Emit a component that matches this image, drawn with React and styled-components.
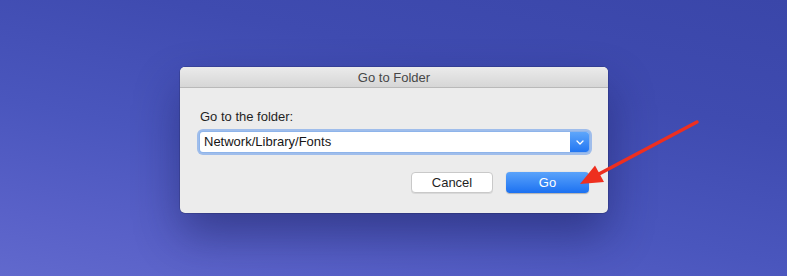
import React from "react";
import styled, { createGlobalStyle } from "styled-components";

const Global = createGlobalStyle`
  html, body { margin: 0; padding: 0; }
  body { font-family: "Liberation Sans", Arial, sans-serif; overflow: hidden; }
`;

const Desktop = styled.div`
  position: relative;
  width: 787px;
  height: 276px;
  box-sizing: border-box;
  padding: 67px 0 0 180px;
  background: linear-gradient(192deg, #3a46a9 0%, #3f4bb0 30%, #4a56bd 60%, #5961c8 85%, #6169cd 100%);
  overflow: hidden;
`;

const Dialog = styled.div`
  width: 428px;
  height: 146px;
  box-sizing: border-box;
  background: #ececec;
  border-radius: 5px;
  box-shadow: 0 0 0 0.5px rgba(0, 0, 0, 0.25), 0 22px 45px rgba(20, 22, 80, 0.45);
  display: flex;
  flex-direction: column;
  overflow: hidden;
`;

const TitleBar = styled.div`
  height: 20px;
  flex: none;
  border-bottom: 1px solid #b9b9b9;
  background: linear-gradient(#ebebeb, #d6d6d6);
  color: #474747;
  font-size: 13px;
  line-height: 21px;
  text-align: center;
`;

const Body = styled.div`
  padding: 21px 19px 20px 20px;
  display: flex;
  flex-direction: column;
`;

const Label = styled.div`
  font-size: 13px;
  line-height: 16px;
  color: #1f1f1f;
`;

const Combo = styled.div`
  margin-top: 7px;
  height: 20px;
  display: flex;
  border-radius: 3px;
  background: #fff;
  box-shadow: 0 0 0 1px #8eb4ea, 0 0 0 3px #9fbdeb;
`;

const Field = styled.div`
  flex: 1;
  padding-left: 4px;
  font-size: 13px;
  line-height: 20px;
  color: #161616;
`;

const DropButton = styled.div`
  width: 19px;
  flex: none;
  display: flex;
  align-items: center;
  justify-content: center;
  border-radius: 0 3px 3px 0;
  background: linear-gradient(#5ea6fb, #2276f2);
`;

const Actions = styled.div`
  margin-top: 20px;
  display: flex;
  justify-content: flex-end;
  gap: 13px;
`;

const Button = styled.div`
  width: ${(p) => p.$w}px;
  height: 21px;
  box-sizing: border-box;
  border-radius: 4px;
  font-size: 13px;
  line-height: ${(p) => (p.$primary ? 21 : 19)}px;
  text-align: center;
  color: ${(p) => (p.$primary ? "#fff" : "#1f1f1f")};
  background: ${(p) => (p.$primary ? "linear-gradient(#5aa3fb, #1c71f1)" : "#fff")};
  border: ${(p) => (p.$primary ? "none" : "1px solid #c9c9c9")};
  box-shadow: ${(p) => (p.$primary ? "0 0.5px 1px rgba(0,0,0,0.25)" : "0 1px 0 rgba(0,0,0,0.08)")};
`;

const ArrowLayer = styled.svg`
  position: absolute;
  left: 0;
  top: 0;
  pointer-events: none;
`;

export default function App() {
  return (
    <>
      <Global />
      <Desktop>
        <Dialog>
          <TitleBar>Go to Folder</TitleBar>
          <Body>
            <Label>Go to the folder:</Label>
            <Combo>
              <Field>Network/Library/Fonts</Field>
              <DropButton>
                <svg width="8" height="5" viewBox="0 0 8 5">
                  <path d="M1 1 L4 4 L7 1" fill="none" stroke="#fff" strokeWidth="1.3" strokeLinecap="round" strokeLinejoin="round" />
                </svg>
              </DropButton>
            </Combo>
            <Actions>
              <Button $w={82}>Cancel</Button>
              <Button $w={83} $primary>Go</Button>
            </Actions>
          </Body>
        </Dialog>
        <ArrowLayer width="787" height="276" viewBox="0 0 787 276">
          <line x1="697" y1="122" x2="598" y2="174.5" stroke="#ee2f1f" strokeWidth="3.5" strokeLinecap="round" />
          <polygon points="580,184 595,165.5 604,182" fill="#ee2f1f" />
        </ArrowLayer>
      </Desktop>
    </>
  );
}
